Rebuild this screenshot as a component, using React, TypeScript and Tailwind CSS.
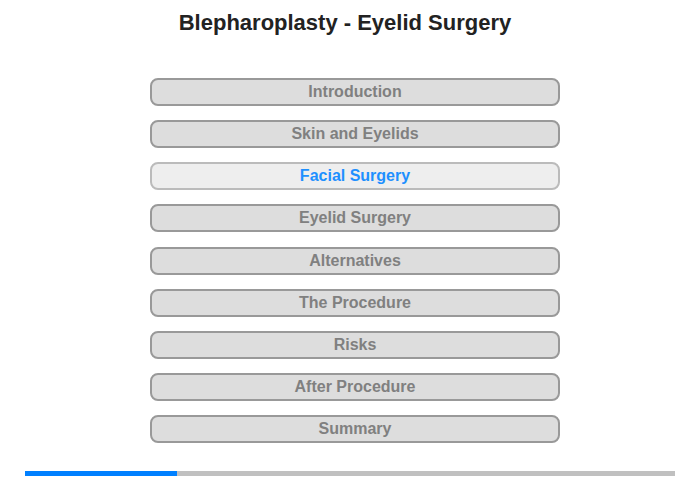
const chapters = [
  "Introduction",
  "Skin and Eyelids",
  "Facial Surgery",
  "Eyelid Surgery",
  "Alternatives",
  "The Procedure",
  "Risks",
  "After Procedure",
  "Summary",
];

const current = 2;

const App = () => {
  return (
    <div className="w-[700px] h-[480px] bg-white font-['Liberation_Sans',Arial,sans-serif]">
      <h1 className="w-[690px] pt-[10px] text-center text-[22px] leading-[25px] font-bold text-[#222222]">
        Blepharoplasty - Eyelid Surgery
      </h1>

      <div className="mt-[43px] ml-[150px] w-[410px] flex flex-col gap-[14.125px]">
        {chapters.map((name, i) =>
          i === current ? (
            <div
              key={name}
              className="h-[28px] rounded-[8px] border-2 border-[#bbbbbb] bg-[#eeeeee] flex items-center justify-center text-[16px] font-bold text-[#1e90ff]"
            >
              {name}
            </div>
          ) : (
            <div
              key={name}
              className="h-[28px] rounded-[8px] border-2 border-[#999999] bg-[#dddddd] flex items-center justify-center text-[16px] font-bold text-[#808080]"
            >
              {name}
            </div>
          )
        )}
      </div>

      <div className="mt-[28px] ml-[25px] w-[650px] h-[5px] bg-[#c0c0c0] flex">
        <div className="w-[152px] h-full bg-[#0080ff]" />
      </div>
    </div>
  );
};

export default App;
